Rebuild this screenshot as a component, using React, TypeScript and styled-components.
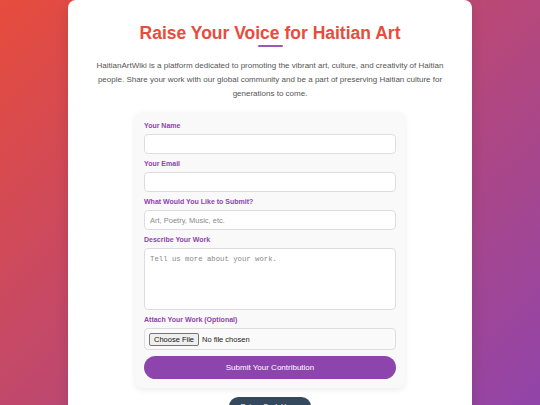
import React from "react";
import styled, { createGlobalStyle } from "styled-components";

const GlobalStyle = createGlobalStyle`
  html, body {
    margin: 0;
    padding: 0;
  }
  body {
    min-height: 100vh;
    overflow: hidden;
    background: linear-gradient(135deg, #e74c3c, #8e44ad);
    font-family: "Liberation Sans", Arial, sans-serif;
  }
`;

const Card = styled.main`
  box-sizing: border-box;
  width: 404px;
  min-height: 430px;
  margin: 0 auto;
  padding: 23px 20px 20px;
  background: #fff;
  border-radius: 8px;
  box-shadow: 0 4px 14px rgba(0, 0, 0, 0.12);
`;

const Title = styled.h1`
  margin: 0;
  font-size: 17.5px;
  line-height: 20px;
  font-weight: bold;
  color: #e74c3c;
  text-align: center;
`;

const TitleBar = styled.div`
  width: 25px;
  height: 2px;
  margin: 2px auto 12px;
  border-radius: 1px;
  background: #9b59b6;
`;

const Intro = styled.p`
  margin: 0 0 11px;
  font-size: 8px;
  line-height: 14px;
  color: #555;
  text-align: center;
`;

const Form = styled.form`
  box-sizing: border-box;
  width: 270px;
  margin: 0 auto;
  padding: 9px;
  background: #f9f9f9;
  border-radius: 8px;
  box-shadow: 0 2px 6px rgba(0, 0, 0, 0.08);
`;

const Label = styled.label`
  display: block;
  margin-bottom: 3px;
  font-size: 7px;
  line-height: 10px;
  font-weight: bold;
  color: #8e44ad;
`;

const Input = styled.input`
  display: block;
  box-sizing: border-box;
  width: 100%;
  height: 20px;
  margin: 0 0 5px;
  padding: 0 5px;
  border: 1px solid #ddd;
  border-radius: 4px;
  background: #fff;
  font-family: "Liberation Sans", Arial, sans-serif;
  font-size: 7.5px;
  color: #333;
  outline: none;

  &::placeholder {
    color: #8a8a8a;
  }
`;

const TextArea = styled.textarea`
  display: block;
  box-sizing: border-box;
  width: 100%;
  height: 62px;
  margin: 0 0 5px;
  padding: 6px 5px;
  border: 1px solid #ddd;
  border-radius: 4px;
  background: #fff;
  resize: none;
  font-family: "Liberation Mono", "Courier New", monospace;
  font-size: 7.3px;
  color: #333;
  outline: none;

  &::placeholder {
    color: #8a8a8a;
  }
`;

const FileBox = styled.div`
  box-sizing: border-box;
  display: flex;
  align-items: center;
  height: 22px;
  padding: 0 4px;
  border: 1px solid #ddd;
  border-radius: 4px;
  background: #fafafa;
`;

const FileInput = styled.input`
  font-family: "Liberation Sans", Arial, sans-serif;
  font-size: 7.5px;
  color: #222;

  &::file-selector-button {
    margin-right: 3px;
    padding: 1px 4px;
    border: 1px solid #767676;
    border-radius: 2px;
    background: #efefef;
    font-family: "Liberation Sans", Arial, sans-serif;
    font-size: 7.5px;
    color: #111;
  }
`;

const SubmitButton = styled.button`
  display: block;
  width: 100%;
  height: 23px;
  margin-top: 6px;
  border: none;
  border-radius: 12px;
  background: #8e44ad;
  color: #fff;
  font-family: "Liberation Sans", Arial, sans-serif;
  font-size: 8px;
  cursor: pointer;
`;

const HomeLink = styled.a`
  display: block;
  width: fit-content;
  margin: 9px auto 0;
  padding: 5px 11px;
  border-radius: 10px;
  background: #34495e;
  color: #fff;
  font-size: 7px;
  line-height: 9px;
  text-decoration: none;
`;

const fields = [
  { id: "name", label: "Your Name", type: "text", placeholder: "" },
  { id: "email", label: "Your Email", type: "email", placeholder: "" },
  {
    id: "kind",
    label: "What Would You Like to Submit?",
    type: "text",
    placeholder: "Art, Poetry, Music, etc.",
  },
];

export default function App() {
  return (
    <>
      <GlobalStyle />
      <Card>
        <Title>Raise Your Voice for Haitian Art</Title>
        <TitleBar />
        <Intro>
          HaitianArtWiki is a platform dedicated to promoting the vibrant art,
          culture, and creativity of Haitian people. Share your work with our
          global community and be a part of preserving Haitian culture for
          generations to come.
        </Intro>
        <Form onSubmit={(e) => e.preventDefault()}>
          {fields.map((f) => (
            <React.Fragment key={f.id}>
              <Label htmlFor={f.id}>{f.label}</Label>
              <Input id={f.id} type={f.type} placeholder={f.placeholder} />
            </React.Fragment>
          ))}
          <Label htmlFor="desc">Describe Your Work</Label>
          <TextArea id="desc" placeholder="Tell us more about your work." />
          <Label htmlFor="file">Attach Your Work (Optional)</Label>
          <FileBox>
            <FileInput id="file" type="file" />
          </FileBox>
          <SubmitButton type="submit">Submit Your Contribution</SubmitButton>
        </Form>
        <HomeLink href="#">Return Back Home</HomeLink>
      </Card>
    </>
  );
}
